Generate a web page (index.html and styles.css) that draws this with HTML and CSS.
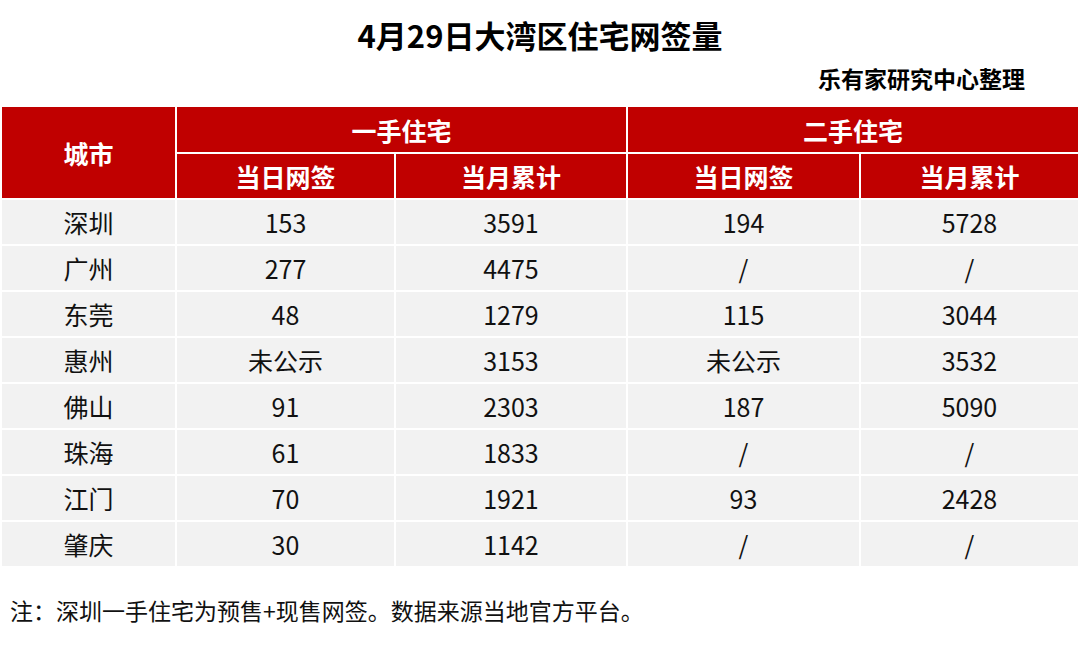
FILE: index.html
```html
<!DOCTYPE html>
<html lang="zh-CN">
<head>
<meta charset="utf-8">
<title>4月29日大湾区住宅网签量</title>
<link rel="stylesheet" href="styles.css">
</head>
<body>
<div class="page">
  <h1 class="title">4月29日大湾区住宅网签量</h1>
  <div class="source">乐有家研究中心整理</div>
  <div class="grid">
    <div class="hd city">城市</div>
    <div class="hd group g1">一手住宅</div>
    <div class="hd group g2">二手住宅</div>
    <div class="hd">当日网签</div>
    <div class="hd">当月累计</div>
    <div class="hd">当日网签</div>
    <div class="hd">当月累计</div>

    <div class="cell">深圳</div><div class="cell">153</div><div class="cell">3591</div><div class="cell">194</div><div class="cell">5728</div>
    <div class="cell">广州</div><div class="cell">277</div><div class="cell">4475</div><div class="cell">/</div><div class="cell">/</div>
    <div class="cell">东莞</div><div class="cell">48</div><div class="cell">1279</div><div class="cell">115</div><div class="cell">3044</div>
    <div class="cell">惠州</div><div class="cell">未公示</div><div class="cell">3153</div><div class="cell">未公示</div><div class="cell">3532</div>
    <div class="cell">佛山</div><div class="cell">91</div><div class="cell">2303</div><div class="cell">187</div><div class="cell">5090</div>
    <div class="cell">珠海</div><div class="cell">61</div><div class="cell">1833</div><div class="cell">/</div><div class="cell">/</div>
    <div class="cell">江门</div><div class="cell">70</div><div class="cell">1921</div><div class="cell">93</div><div class="cell">2428</div>
    <div class="cell">肇庆</div><div class="cell">30</div><div class="cell">1142</div><div class="cell">/</div><div class="cell">/</div>
  </div>
  <p class="note">注：深圳一手住宅为预售+现售网签。数据来源当地官方平台。</p>
</div>
</body>
</html>
```
FILE: styles.css
```css
html, body {
  margin: 0;
  padding: 0;
  background: #ffffff;
}
body {
  font-family: "Noto Sans CJK SC", "Noto Sans", sans-serif;
  color: #111111;
  width: 1080px;
  height: 648px;
  overflow: hidden;
}
.page {
  display: flex;
  flex-direction: column;
}
.title {
  margin: 15px 0 0 0;
  height: 40px;
  line-height: 40px;
  font-size: 31px;
  font-weight: 700;
  text-align: center;
  color: #000000;
}
.source {
  margin-top: 8px;
  height: 30px;
  line-height: 30px;
  font-size: 23px;
  font-weight: 700;
  text-align: right;
  padding-right: 55px;
  color: #000000;
}
.grid {
  margin: 14px 0 0 2px;
  display: grid;
  grid-template-columns: 173px 217px 230px 231px 217px;
  grid-template-rows: 45px 44px repeat(8, 44px);
  gap: 2px;
  width: 1076px;
}
.hd {
  background: #c00000;
  color: #ffffff;
  font-weight: 700;
  font-size: 25px;
  display: flex;
  align-items: center;
  justify-content: center;
}
.city {
  grid-row: 1 / span 2;
}
.g1 {
  grid-column: 2 / span 2;
}
.g2 {
  grid-column: 4 / span 2;
}
.cell {
  background: #f2f2f2;
  font-size: 25px;
  display: flex;
  align-items: center;
  justify-content: center;
  color: #111111;
}
.note {
  margin: 29px 0 0 10px;
  line-height: 30px;
  font-size: 23px;
  color: #111111;
}
```
